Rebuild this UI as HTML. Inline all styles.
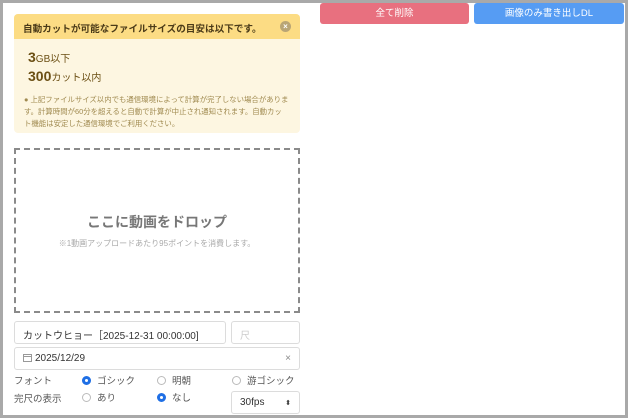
<!DOCTYPE html>
<html><head><meta charset="utf-8"><style>
*{box-sizing:border-box;margin:0;padding:0}
body{width:628px;height:418px;overflow:hidden;background:#fff;font-family:"Liberation Sans","Noto Sans CJK JP",sans-serif;position:relative}
.frame{position:absolute;left:0;top:0;width:628px;height:418px;border:3px solid #a9a9a9;pointer-events:none}
.a{position:absolute}
.note{left:14px;top:14px;width:286px;height:119px;background:#fdf6e1;border-radius:4px;overflow:hidden}
.nh{height:25px;background:#fcdc84;font-size:9.6px;font-weight:bold;color:#4a3a18;padding:7px 0 0 9px;position:relative;white-space:nowrap}
.x{position:absolute;right:9px;top:7px;width:11px;height:11px;border-radius:50%;background:#b9a575;color:#fff;font-size:8px;line-height:11px;text-align:center;font-weight:bold}
.big{color:#6b4f14;font-weight:bold;font-size:14px;line-height:17px}
.big small{font-size:10px;font-weight:normal}
.fine{font-size:7.4px;color:#a08a50;line-height:12px;padding:0 9px 0 10px}
.drop{left:14px;top:148px;width:286px;height:165px;border:2px dashed #8a8a8a}
.inp{border:1px solid #dcdcdc;border-radius:3px;font-size:10px;color:#333;padding:5px 8px;height:23px}
.btn{top:3px;height:21px;border-radius:3px;color:#fff;font-size:9.5px;text-align:center;line-height:21px}
.lbl{font-size:9.5px;color:#555}
.r{display:inline-block;width:9px;height:9px;border-radius:50%;border:1px solid #bbb;vertical-align:-1px;margin-right:6px}
.r.on{border:3px solid #1f6fe5}
</style></head><body>
<div class="a btn" style="left:320px;width:149px;background:#e8707f">全て削除</div>
<div class="a btn" style="left:474px;width:150px;background:#569cf3">画像のみ書き出しDL</div>
<div class="a note">
 <div class="nh">自動カットが可能なファイルサイズの目安は以下です。<div class="x">×</div></div>
 <div style="padding:10px 14px 7px" class="big">3<small>GB以下</small><br>300<small>カット以内</small></div>
 <div class="fine">● 上記ファイルサイズ以内でも通信環境によって計算が完了しない場合がありま す。計算時間が60分を超えると自動で計算が中止され通知されます。自動カッ ト機能は安定した通信環境でご利用ください。</div>
</div>
<div class="a drop">
 <div style="position:absolute;top:62px;width:100%;text-align:center;font-size:14px;font-weight:bold;color:#777">ここに動画をドロップ</div>
 <div style="position:absolute;top:88px;width:100%;text-align:center;font-size:8px;color:#aaa">※1動画アップロードあたり95ポイントを消費します。</div>
</div>
<div class="a inp" style="left:14px;top:321px;width:212px">カットウヒョー［2025-12-31 00:00:00]</div>
<div class="a inp" style="left:231px;top:321px;width:69px;color:#ccc">尺</div>
<div class="a inp" style="left:14px;top:347px;width:286px"><svg width="9" height="9" viewBox="0 0 9 9" style="vertical-align:-1px;margin-right:3px"><rect x="0.5" y="1.5" width="8" height="7" fill="none" stroke="#999"/><line x1="0.5" y1="3.5" x2="8.5" y2="3.5" stroke="#999"/></svg>2025/12/29<span style="position:absolute;right:8px;color:#888">×</span></div>
<div class="a lbl" style="left:14px;top:373px">フォント</div>
<div class="a lbl" style="left:82px;top:373px"><span class="r on"></span>ゴシック</div>
<div class="a lbl" style="left:157px;top:373px"><span class="r"></span>明朝</div>
<div class="a lbl" style="left:232px;top:373px"><span class="r"></span>游ゴシック</div>
<div class="a lbl" style="left:14px;top:391px">完尺の表示</div>
<div class="a lbl" style="left:82px;top:390px"><span class="r"></span>あり</div>
<div class="a lbl" style="left:157px;top:390px"><span class="r on"></span>なし</div>
<div class="a inp" style="left:231px;top:391px;width:69px;height:23px">30fps<span style="position:absolute;right:8px;font-size:7px;top:7px">⬍</span></div>
<div class="frame"></div>
</body></html>
